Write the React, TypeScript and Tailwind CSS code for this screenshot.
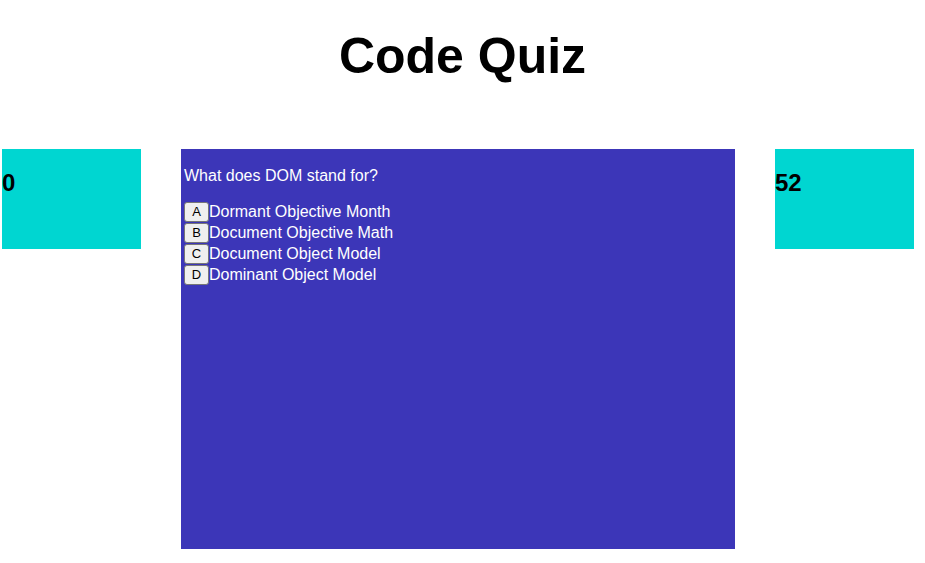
const choices = [
  { key: "A", text: "Dormant Objective Month" },
  { key: "B", text: "Document Objective Math" },
  { key: "C", text: "Document Object Model" },
  { key: "D", text: "Dominant Object Model" },
]

export default function App() {
  return (
    <div className="min-h-screen bg-white font-['Liberation_Sans',Arial,sans-serif] text-black">
      <h1 className="pt-[28px] text-center text-[50px] font-bold leading-[56px]">Code Quiz</h1>

      <div className="mt-[65px] flex gap-10 pl-[2px]">
        {/* score */}
        <div className="h-[100px] w-[139px] bg-[#00d6d1] pt-[20px]">
          <h2 className="text-[24px] font-bold leading-[28px]">0</h2>
        </div>

        {/* quiz */}
        <div className="h-[400px] w-[554px] bg-[#3c36b8] px-[3px] pt-[18px] text-white">
          <p className="text-[16px] leading-[18px]">What does DOM stand for?</p>
          <div className="mt-[16px] flex flex-col">
            {choices.map((c) => (
              <div key={c.key} className="flex h-[21px] items-center">
                <button className="flex h-[20px] w-[25px] items-center justify-center rounded-[3px] border border-[#767676] bg-[#efefef] text-[13px] text-black">
                  {c.key}
                </button>
                <span className="text-[16px] leading-[18px]">{c.text}</span>
              </div>
            ))}
          </div>
        </div>

        {/* timer */}
        <div className="h-[100px] w-[139px] bg-[#00d6d1] pt-[20px]">
          <h2 className="text-[24px] font-bold leading-[28px]">52</h2>
        </div>
      </div>
    </div>
  )
}
